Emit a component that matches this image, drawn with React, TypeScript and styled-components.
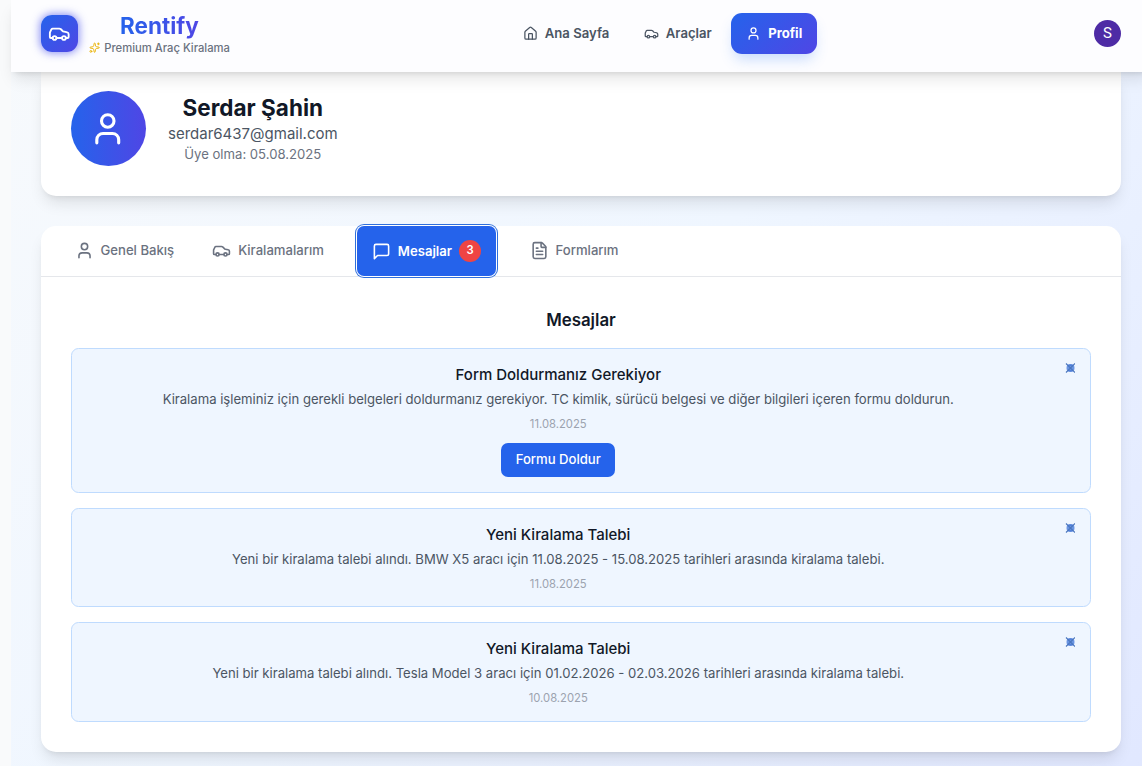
import React from "react";
import styled, { createGlobalStyle, css } from "styled-components";
import { Car, House, User, FileText, Sparkles } from "lucide-react";

const GlobalStyle = createGlobalStyle`
  *, *::before, *::after { box-sizing: border-box; }
  html { font-size: 15px; }
  body {
    margin: 0;
    height: 766px;
    overflow: hidden;
    background: #f9fafb;
    color: #111827;
    font-family: Inter, "Liberation Sans", sans-serif;
    line-height: 1.5;
    text-align: center;
  }
  button { font: inherit; }
  h1, h2, h3, p { margin: 0; }
`;

const Page = styled.div`
  width: 1140px;
  height: 766px;
  margin-left: 11px;
  background: linear-gradient(135deg, #f8fafc 0%, #eff6ff 50%, #e0e7ff 100%) 0 -70px / 100% 880px no-repeat;
`;

const Header = styled.header`
  position: relative;
  z-index: 2;
  display: flex;
  justify-content: space-between;
  align-items: center;
  width: 1140px;
  height: 72px;
  padding: 0 30px 5px;
  background: #fdfdff;
  box-shadow: 0 10px 15px -3px rgba(0, 0, 0, 0.1), 0 4px 6px -4px rgba(0, 0, 0, 0.15);
`;

const Brand = styled.div`
  display: flex;
  align-items: center;
  gap: 11px;
`;

const BrandMark = styled.span`
  display: grid;
  place-items: center;
  width: 37px;
  height: 37px;
  border-radius: 11px;
  color: #fff;
  background: linear-gradient(135deg, #2563eb, #4f46e5);
  box-shadow: 0 0 9px 1px rgba(70, 80, 235, 0.65);
`;

const BrandText = styled.div`
  display: flex;
  flex-direction: column;
  align-items: center;
  padding-top: 1px;
`;

const BrandName = styled.span`
  font-size: 22.5px;
  line-height: 28px;
  font-weight: 700;
  color: transparent;
  background: linear-gradient(90deg, #2563eb, #4f46e5);
  background-clip: text;
`;

const Tagline = styled.span`
  display: flex;
  align-items: center;
  gap: 4px;
  font-size: 11.25px;
  line-height: 16px;
  font-weight: 500;
  color: #6b7280;
  svg { color: #eab308; }
`;

const Nav = styled.nav`
  display: flex;
  align-items: center;
  gap: 4.5px;
  padding-left: 1px;
`;

const NavLink = styled.a<{ $active?: boolean }>`
  display: flex;
  align-items: center;
  gap: 7px;
  height: 41px;
  padding: 0 15px;
  border-radius: 11px;
  font-size: 13.125px;
  font-weight: 600;
  color: #4b5563;
  ${(p) => p.$active && css`
    color: #fff;
    font-weight: 700;
    background: linear-gradient(135deg, #2563eb, #4f46e5);
    box-shadow: 0 8px 14px -3px rgba(59, 130, 246, 0.28);
  `}
`;

const AccountBadge = styled.span`
  display: grid;
  place-items: center;
  width: 27px;
  height: 27px;
  border-radius: 50%;
  background: #4e2ba5;
  color: #fff;
  font-family: Roboto, sans-serif;
  font-size: 15px;
`;

const Main = styled.main`
  display: flex;
  flex-direction: column;
  gap: 30px;
  padding: 0 30px;
`;

const cardShadow = css`
  background: #fff;
  box-shadow: 0 10px 15px -3px rgba(0, 0, 0, 0.1), 0 4px 6px -4px rgba(0, 0, 0, 0.1);
`;

const ProfileCard = styled.section`
  ${cardShadow}
  display: flex;
  align-items: flex-start;
  gap: 22px;
  height: 124px;
  padding: 19px 30px;
  border-radius: 0 0 15px 15px;
`;

const Avatar = styled.div`
  display: grid;
  place-items: center;
  width: 75px;
  height: 75px;
  border-radius: 50%;
  color: #fff;
  background: linear-gradient(90deg, #2563eb, #4f46e5);
  svg { margin-right: 1px; }
`;

const FullName = styled.h1`
  margin-top: 2px;
  font-size: 22.5px;
  line-height: 30px;
  font-weight: 700;
`;

const Email = styled.p`
  font-size: 15px;
  line-height: 22px;
  color: #4b5563;
`;

const Since = styled.p`
  font-size: 13.125px;
  line-height: 19px;
  color: #6b7280;
`;

const Panel = styled.section`
  ${cardShadow}
  height: 526px;
  border-radius: 15px;
`;

const Tabs = styled.div`
  display: flex;
  gap: 8px;
  height: 51px;
  padding-left: 18.5px;
  border-bottom: 1px solid #e5e7eb;
`;

const Tab = styled.button<{ $selected?: boolean }>`
  display: flex;
  align-items: center;
  gap: 7px;
  height: 50px;
  padding: 0 15px;
  border: 0;
  background: none;
  font-size: 13.125px;
  font-weight: 500;
  color: #6b7280;
  svg { margin-bottom: 1px; }
  ${(p) => p.$selected && css`
    margin: 0 10.5px 0 10px;
    svg { margin: 1px 0 0; }
    color: #fff;
    font-weight: 600;
    border-radius: 7px;
    background: #2563eb;
    box-shadow: 0 0 0 1px #fff, 0 0 0 2px #2f6fdc;
  `}
`;

const TabLabel = styled.span<{ $low?: boolean }>`
  padding-top: ${(p) => (p.$low ? 1 : 0)}px;
`;

const Count = styled.span`
  display: grid;
  place-items: center;
  width: 22px;
  height: 22px;
  padding-bottom: 1px;
  border-radius: 50%;
  background: #ef4444;
  color: #fff;
  font-size: 11.25px;
  font-weight: 600;
`;

const Messages = styled.div`
  display: flex;
  flex-direction: column;
  gap: 15px;
  padding: 30px;
`;

const Heading = styled.h2`
  font-size: 16.875px;
  line-height: 26px;
  font-weight: 600;
`;

const Message = styled.article<{ $height: number }>`
  display: flex;
  align-items: flex-start;
  height: ${(p) => p.$height}px;
  padding: 14px 15px;
  border: 1px solid #bfdbfe;
  border-radius: 7.5px;
  background: #eff6ff;
`;

const MessageBody = styled.div`
  flex: 1;
  display: flex;
  flex-direction: column;
  align-items: center;
`;

const Subject = styled.h3`
  font-size: 15px;
  line-height: 23px;
  font-weight: 500;
`;

const Copy = styled.p`
  margin-top: 4px;
  font-size: 13.125px;
  line-height: 19px;
  color: #4b5563;
`;

const When = styled.p`
  margin-top: 8px;
  font-size: 11.25px;
  line-height: 15px;
  color: #9ca3af;
`;

const Action = styled.button`
  height: 34px;
  margin-top: 11px;
  padding: 0 14.5px;
  border: 0;
  border-radius: 7px;
  background: #2563eb;
  color: #fff;
  font-size: 13.125px;
  font-weight: 500;
`;

const Dismiss = styled.span`
  display: flex;
  width: 45.5px;
  justify-content: flex-end;
`;

const CloseMark = () => (
  <svg width="10" height="10" viewBox="0 0 10 10">
    <circle cx="5.5" cy="5" r="4" fill="#6a94e2" />
    <path d="M1 .5l9 9M10 .5l-9 9" stroke="#4a76bd" strokeWidth="1.1" />
    <path d="M3.5 2.2h4M3.5 7.8h4" stroke="#3566cb" strokeWidth="1" opacity=".6" />
  </svg>
);

const ChatIcon = () => (
  <svg width="19" height="19" viewBox="0 0 24 24" fill="none" stroke="currentColor" strokeWidth="2" strokeLinecap="round" strokeLinejoin="round">
    <path d="M21 15a2 2 0 0 1-2 2H7l-4 4V5a2 2 0 0 1 2-2h14a2 2 0 0 1 2 2z" />
  </svg>
);

const messages = [
  {
    subject: "Form Doldurmanız Gerekiyor",
    copy: "Kiralama işleminiz için gerekli belgeleri doldurmanız gerekiyor. TC kimlik, sürücü belgesi ve diğer bilgileri içeren formu doldurun.",
    date: "11.08.2025",
    action: "Formu Doldur",
    height: 145,
  },
  {
    subject: "Yeni Kiralama Talebi",
    copy: "Yeni bir kiralama talebi alındı. BMW X5 aracı için 11.08.2025 - 15.08.2025 tarihleri arasında kiralama talebi.",
    date: "11.08.2025",
    height: 99,
  },
  {
    subject: "Yeni Kiralama Talebi",
    copy: "Yeni bir kiralama talebi alındı. Tesla Model 3 aracı için 01.02.2026 - 02.03.2026 tarihleri arasında kiralama talebi.",
    date: "10.08.2025",
    height: 100,
  },
];

export default function App() {
  return (
    <>
      <GlobalStyle />
      <Page>
        <Header>
          <Brand>
            <BrandMark><Car size={22.5} /></BrandMark>
            <BrandText>
              <BrandName>Rentify</BrandName>
              <Tagline><Sparkles size={11.25} />Premium Araç Kiralama</Tagline>
            </BrandText>
          </Brand>
          <Nav>
            <NavLink><House size={15} />Ana Sayfa</NavLink>
            <NavLink><Car size={15} />Araçlar</NavLink>
            <NavLink $active><User size={15} />Profil</NavLink>
          </Nav>
          <AccountBadge>S</AccountBadge>
        </Header>
        <Main>
          <ProfileCard>
            <Avatar><User size={37.5} /></Avatar>
            <div>
              <FullName>Serdar Şahin</FullName>
              <Email>serdar6437@gmail.com</Email>
              <Since>Üye olma: 05.08.2025</Since>
            </div>
          </ProfileCard>
          <Panel>
            <Tabs>
              <Tab><User size={19} /><TabLabel>Genel Bakış</TabLabel></Tab>
              <Tab><Car size={19} /><TabLabel>Kiralamalarım</TabLabel></Tab>
              <Tab $selected><ChatIcon /><TabLabel $low>Mesajlar</TabLabel><Count>3</Count></Tab>
              <Tab><FileText size={19} /><TabLabel>Formlarım</TabLabel></Tab>
            </Tabs>
            <Messages>
              <Heading>Mesajlar</Heading>
              {messages.map((m) => (
                <Message key={m.copy} $height={m.height}>
                  <MessageBody>
                    <Subject>{m.subject}</Subject>
                    <Copy>{m.copy}</Copy>
                    <When>{m.date}</When>
                    {m.action && <Action>{m.action}</Action>}
                  </MessageBody>
                  <Dismiss><CloseMark /></Dismiss>
                </Message>
              ))}
            </Messages>
          </Panel>
        </Main>
      </Page>
    </>
  );
}
